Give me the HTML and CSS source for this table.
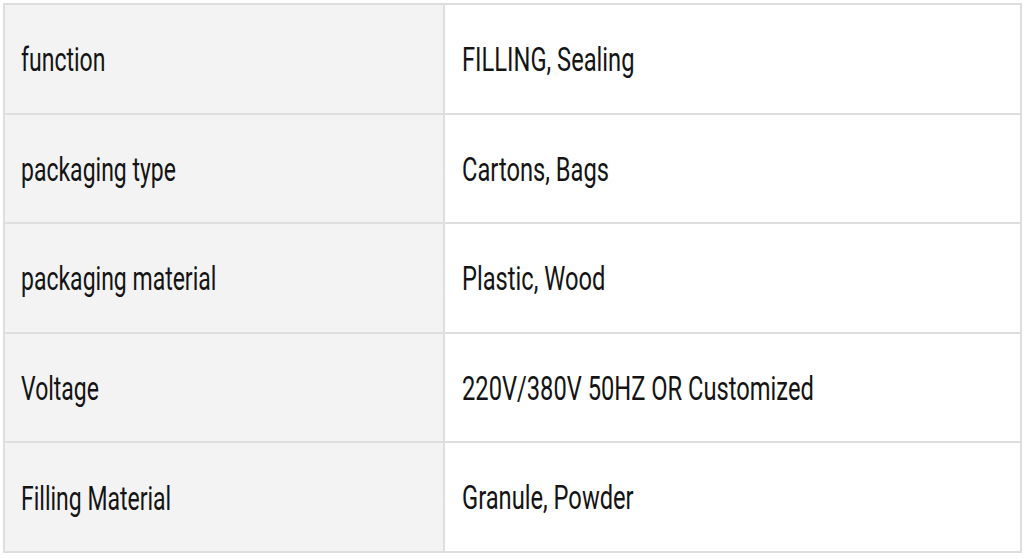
FILE: index.html
```html
<!DOCTYPE html>
<html>
<head>
<meta charset="utf-8">
<link rel="stylesheet" href="styles.css">
</head>
<body>
<table class="spec">
  <tr><td class="key"><span class="t">function</span></td><td class="val"><span class="t">FILLING, Sealing</span></td></tr>
  <tr><td class="key"><span class="t">packaging type</span></td><td class="val"><span class="t">Cartons, Bags</span></td></tr>
  <tr><td class="key"><span class="t">packaging material</span></td><td class="val"><span class="t">Plastic, Wood</span></td></tr>
  <tr><td class="key"><span class="t">Voltage</span></td><td class="val"><span class="t">220V/380V 50HZ OR Customized</span></td></tr>
  <tr><td class="key"><span class="t">Filling Material</span></td><td class="val"><span class="t">Granule, Powder</span></td></tr>
</table>
</body>
</html>
```

FILE: styles.css
```css
html, body {
  margin: 0;
  padding: 0;
  background: #ffffff;
}
body {
  padding: 3px 0 0 3px;
  font-family: Roboto, "Liberation Sans", sans-serif;
  color: #141414;
}
.spec {
  border-collapse: collapse;
  width: 1019px;
  table-layout: fixed;
}
.spec td {
  border: 2px solid #dedede;
  height: 103.6px;
  padding: 4px 0 0 17px;
  vertical-align: middle;
  font-size: 23.7px;
  line-height: 1;
}
.spec td.key {
  width: 422px;
  padding-left: 16px;
  background: #f3f3f3;
  font-size: 23px;
}
.spec td.val {
  background: #ffffff;
}
.t {
  display: inline-block;
  transform: scaleY(1.37);
  transform-origin: left center;
}
.key .t {
  transform: scaleY(1.41);
}
```
